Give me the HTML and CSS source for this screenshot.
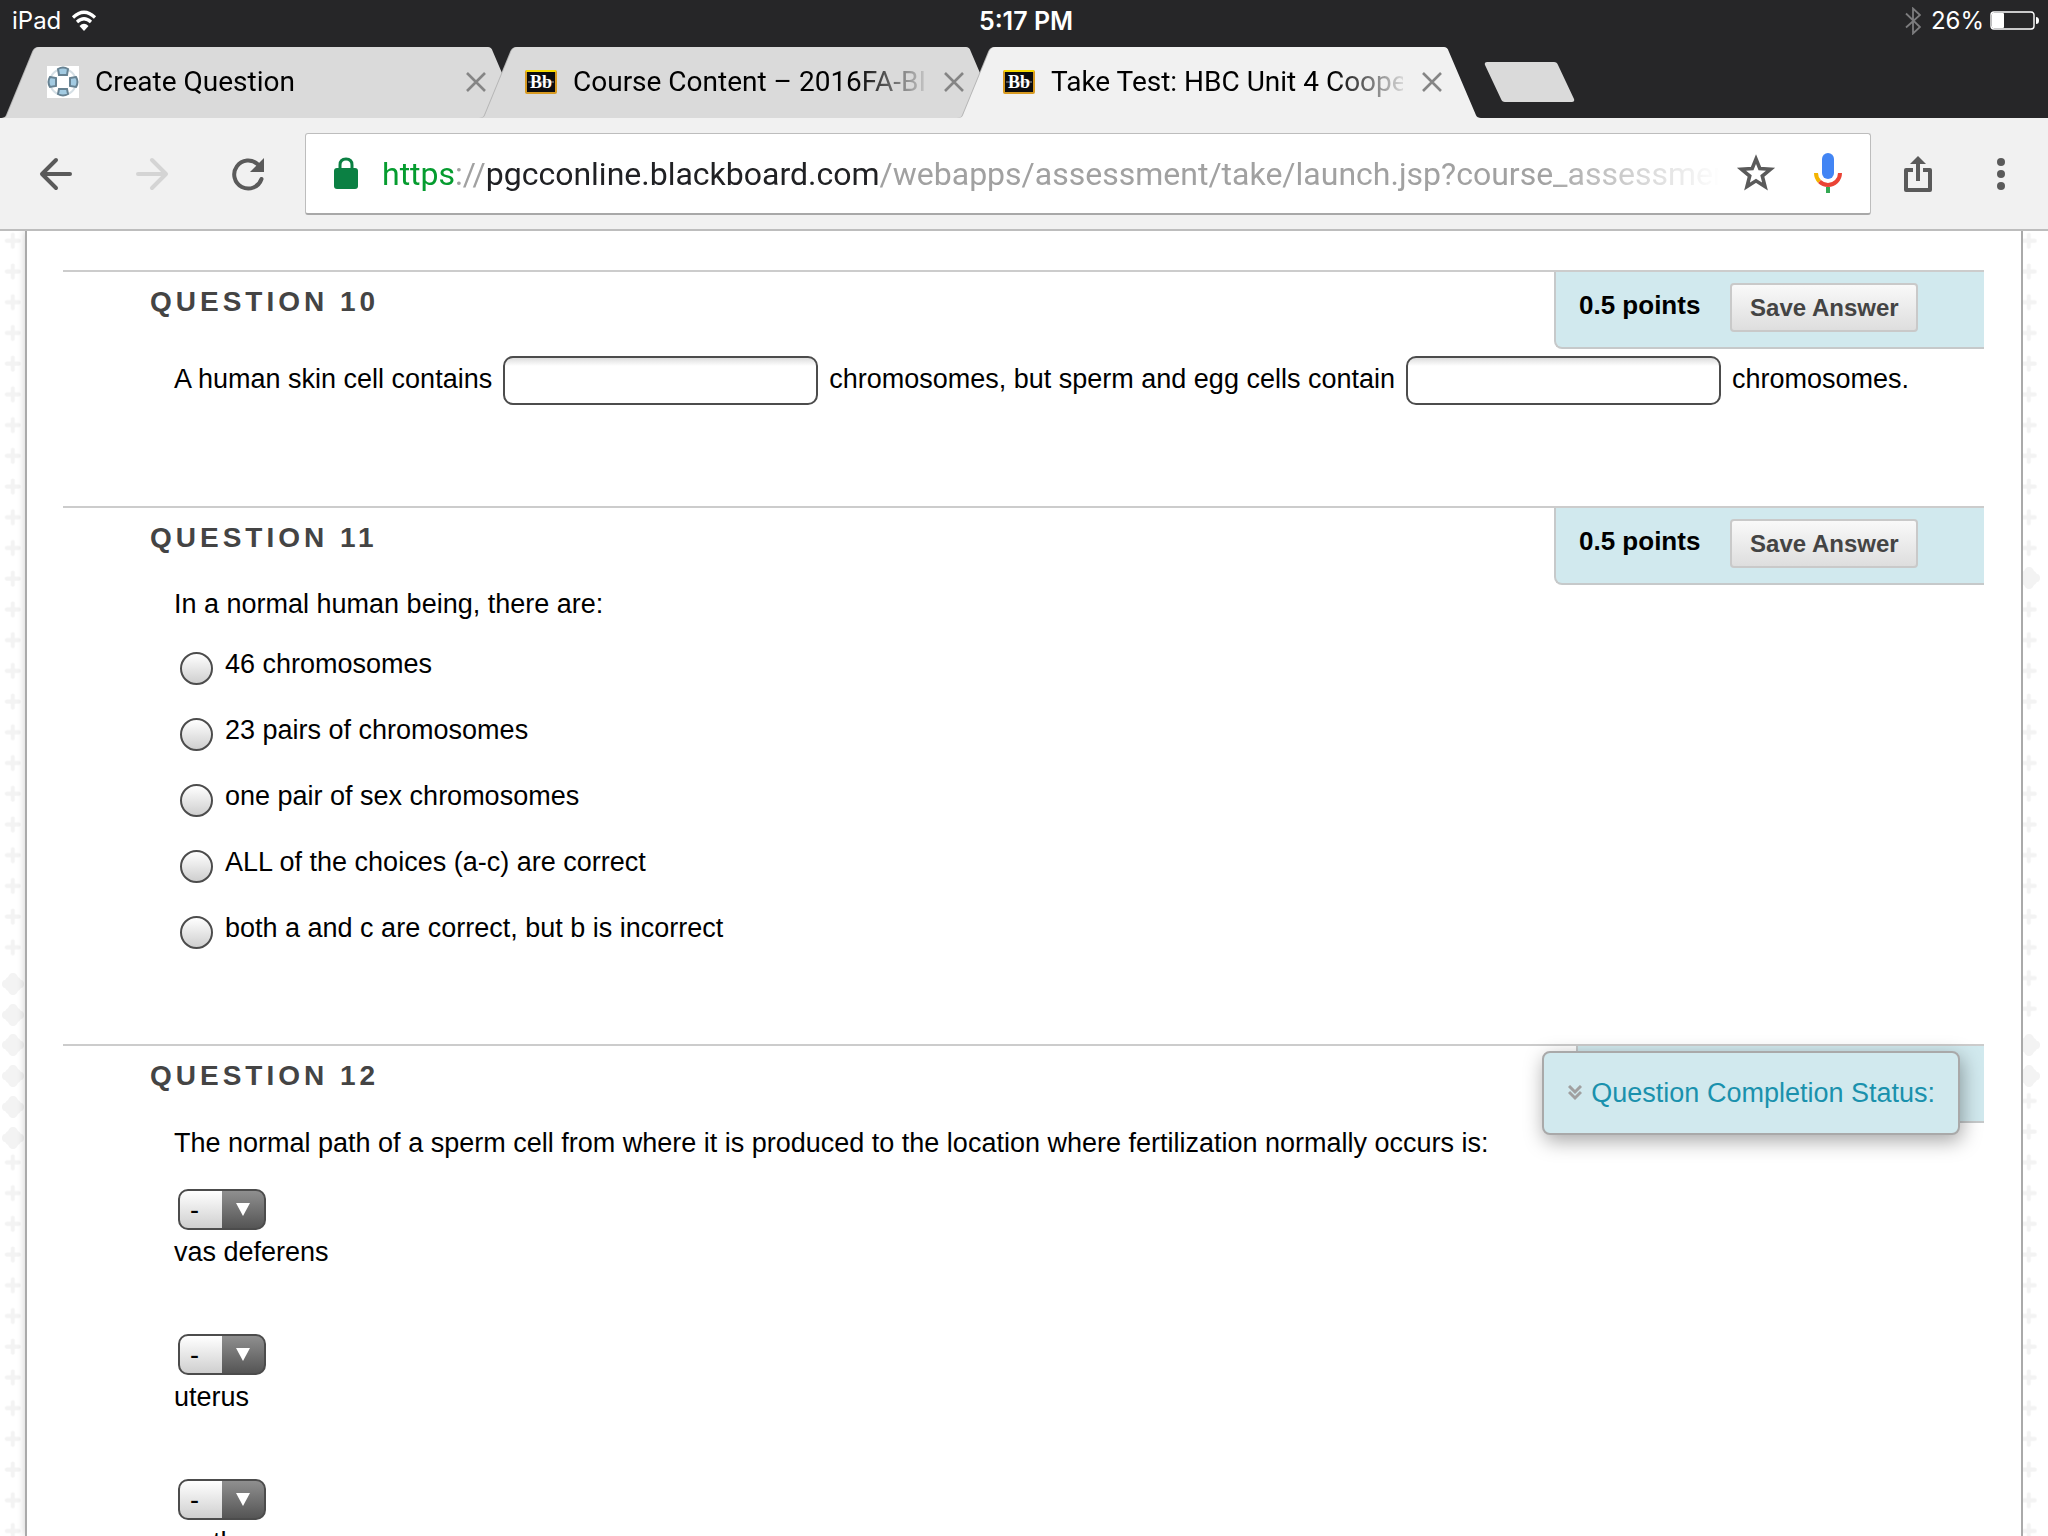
FILE: index.html
```html
<!DOCTYPE html>
<html lang="en">
<head>
<meta charset="utf-8">
<title>Take Test: HBC Unit 4</title>
<link rel="stylesheet" href="styles.css">
</head>
<body>
<svg class="defs" aria-hidden="true">
  <defs>
    <symbol id="tab-shape" viewBox="0 0 520 71" preserveAspectRatio="none">
      <path d="M0 71Q4 71 5 68L31 4Q33 0 37 0H480Q484 0 485 4L512 68Q513 71 517 71Z"/>
    </symbol>
    <symbol id="bb" viewBox="0 0 32 24">
      <rect x="1" y="1" width="30" height="22" rx="1" fill="#0c0c0e" stroke="#d79a22" stroke-width="2"/>
      <path d="M1 1H31" stroke="#f5d800" stroke-width="2"/>
      <path d="M3 12H29" stroke="#55555a" stroke-width="2"/>
      <text x="16" y="18" text-anchor="middle" font-family="Liberation Serif, serif" font-size="18" font-weight="700" fill="#fff">Bb</text>
    </symbol>
    <symbol id="close" viewBox="0 0 22 22">
      <path d="M2 2L20 20M20 2L2 20" stroke="#858585" stroke-width="2.6" fill="none"/>
    </symbol>
    <path id="diamond" d="M0-11C3-11 4-9 5-7C7-6 7-5 8-4C10-4 11-2 11 0C11 2 10 4 8 4C7 5 7 6 5 7C4 9 3 11 0 11C-3 11-4 9-5 7C-7 6-7 5-8 4C-10 4-11 2-11 0C-11-2-10-4-8-4C-7-5-7-6-5-7C-4-9-3-11 0-11Z" fill="#f3f3f3"/>
    <pattern id="plus" x="-2.2" y="-5.7" width="30.72" height="30.72" patternUnits="userSpaceOnUse">
      <path d="M15 9.500V21.500M9 15.500H21" stroke="#f3f3f3" stroke-width="4" stroke-linecap="round"/>
    </pattern>
  </defs>
</svg>

<header class="browser">
  <div class="status-bar">
    <div class="status-left">
      <span>iPad</span>
      <svg width="26" height="24" viewBox="0 0 26 24" aria-hidden="true">
        <path d="M2 8.500Q13-2 24 8.500M6 13Q13 6.500 20 13" fill="none" stroke="#fff" stroke-width="3.200"/>
        <path d="M8.500 17Q13 12.500 17.500 17L13 22Z" fill="#fff"/>
      </svg>
    </div>
    <time class="clock">5:17 PM</time>
    <div class="status-right">
      <svg width="16" height="28" viewBox="0 0 16 28" aria-hidden="true">
        <path d="M1 6.500L15 20L8 26.500V1.500L15 8L1 20.500" fill="none" stroke="#7c7c7e" stroke-width="1.800"/>
      </svg>
      <span>26%</span>
      <svg class="battery" width="50" height="19" viewBox="0 0 50 19" aria-hidden="true">
        <rect x="1" y="1" width="43" height="17" rx="3" fill="none" stroke="#fff" stroke-width="1.400"/>
        <rect x="2" y="2" width="12" height="15" rx="1" fill="#fff"/>
        <path d="M46 6Q49 6 49 9.500T46 13Z" fill="#fff"/>
      </svg>
    </div>
  </div>

  <nav class="tabs" aria-label="Tabs">
    <div class="tab">
      <svg class="tab-back"><use href="#tab-shape"/></svg>
      <svg class="favicon" width="32" height="32" viewBox="0 0 32 32" aria-hidden="true">
        <path d="M0 0H32V32H0Z" fill="#fff"/>
        <circle cx="16" cy="16" r="13" fill="none" stroke="#d5dfe5" stroke-width="2"/>
        <g fill="#a3cbe2" stroke="#678292" stroke-width="2">
          <path d="M11 3Q16 0 21 3L20 9H12Z"/>
          <path d="M12 23H20L21 28Q16 31 11 28Z"/>
          <path d="M3 11L9 12V20L3 21Q0 16 3 11Z"/>
          <path d="M29 11L23 12V20L29 21Q32 16 29 11Z"/>
        </g>
      </svg>
      <a class="tab-title" href="#create">Create Question</a>
      <button class="tab-close" aria-label="Close tab"><svg width="22" height="22"><use href="#close"/></svg></button>
    </div>
    <div class="tab">
      <svg class="tab-back"><use href="#tab-shape"/></svg>
      <svg class="favicon" width="32" height="24" aria-hidden="true"><use href="#bb"/></svg>
      <a class="tab-title" href="#content">Course Content – 2016FA-BIO</a>
      <button class="tab-close" aria-label="Close tab"><svg width="22" height="22"><use href="#close"/></svg></button>
    </div>
    <div class="tab active">
      <svg class="tab-back"><use href="#tab-shape"/></svg>
      <svg class="favicon" width="32" height="24" aria-hidden="true"><use href="#bb"/></svg>
      <a class="tab-title" href="#test">Take Test: HBC Unit 4 Cooper</a>
      <button class="tab-close" aria-label="Close tab"><svg width="22" height="22"><use href="#close"/></svg></button>
    </div>
    <button class="new-tab" aria-label="New tab">
      <svg width="91" height="40" viewBox="0 0 91 40"><path d="M3 0H70Q73 0 74 3L90 37Q91 40 88 40H21Q18 40 17 37L1 3Q0 0 3 0Z" fill="#dadada"/></svg>
    </button>
  </nav>

  <div class="toolbar">
    <button class="tool" aria-label="Back">
      <svg width="34" height="34" viewBox="0 0 34 34"><path d="M31 17H4M17 3L3 17L17 31" fill="none" stroke="#5a5a5a" stroke-width="4" stroke-linecap="round" stroke-linejoin="round"/></svg>
    </button>
    <button class="tool" aria-label="Forward" disabled>
      <svg width="34" height="34" viewBox="0 0 34 34"><path d="M3 17H30M17 3L31 17L17 31" fill="none" stroke="#d4d4d4" stroke-width="4" stroke-linecap="round" stroke-linejoin="round"/></svg>
    </button>
    <button class="tool" aria-label="Reload">
      <svg width="34" height="34" viewBox="0 0 34 34"><path d="M30.500 22A14 14 0 1 1 27 7.500" fill="none" stroke="#5a5a5a" stroke-width="4" stroke-linecap="round"/><path d="M33 1V15H19Z" fill="#5a5a5a"/></svg>
    </button>
    <div class="omnibox">
      <svg width="24" height="32" viewBox="0 0 24 32" aria-hidden="true"><path d="M6 13V8Q6 2 12 2T18 8V13" fill="none" stroke="#0b8043" stroke-width="3"/><rect y="11" width="24" height="21" rx="3" fill="#0b8043"/></svg>
      <div class="url" role="textbox" aria-label="Address"><span class="scheme">https</span>://<span class="host">pgcconline.blackboard.com</span>/webapps/assessment/take/launch.jsp?course_assessment_id</div>
      <button class="box-tool" aria-label="Bookmark">
        <svg width="40" height="38" viewBox="0 0 40 38"><path d="M20 5L23.800 14.500L34.500 15.300L26.300 22L29 32.500L20 26.800L11 32.500L13.700 22L5.500 15.300L16.200 14.500Z" fill="none" stroke="#5a5a5a" stroke-width="3.600"/></svg>
      </button>
      <button class="box-tool" aria-label="Voice search">
        <svg width="30" height="40" viewBox="0 0 30 40"><rect x="9" width="12" height="26" rx="6" fill="#4285f4"/><path d="M3 20Q3 25 6.500 28.500" fill="none" stroke="#f4b400" stroke-width="4"/><path d="M6.500 28.500Q10 32 15 32Q20 32 23.500 28.500T27 20" fill="none" stroke="#ea4335" stroke-width="4"/><path d="M15 34V40" stroke="#34a853" stroke-width="4"/></svg>
      </button>
    </div>
    <button class="tool share" aria-label="Share">
      <svg width="28" height="36" viewBox="0 0 28 36"><path d="M9 14H2V34H26V14H19M14 25V5" fill="none" stroke="#5a5a5a" stroke-width="4" stroke-linejoin="round"/><path d="M14 0L22 8H6Z" fill="#5a5a5a"/></svg>
    </button>
    <button class="tool menu" aria-label="Menu">
      <svg width="8" height="32" viewBox="0 0 8 32"><g fill="#5a5a5a"><circle cx="4" cy="4" r="4"/><circle cx="4" cy="16" r="4"/><circle cx="4" cy="28" r="4"/></g></svg>
    </button>
  </div>
</header>

<div class="viewport">
  <svg class="margin" aria-hidden="true">
    <rect width="100%" height="100%" fill="url(#plus)"/>
    <g><path d="M0 738H25V922H0Z" fill="#fff"/><use href="#diamond" x="13" y="753"/><use href="#diamond" x="13" y="784"/><use href="#diamond" x="13" y="814"/><use href="#diamond" x="13" y="845"/><use href="#diamond" x="13" y="876"/><use href="#diamond" x="13" y="907"/></g>
  </svg>
  <main class="page">
    <article class="question">
      <header class="question-head">
        <h2>Question 10</h2>
        <div class="score"><strong>0.5 points</strong><button class="save">Save Answer</button></div>
      </header>
      <div class="question-body blanks">
        <label for="blank-a">A human skin cell contains</label>
        <input id="blank-a" type="text">
        <label for="blank-b">chromosomes, but sperm and egg cells contain</label>
        <input id="blank-b" type="text">
        <span>chromosomes.</span>
      </div>
    </article>

    <article class="question">
      <header class="question-head">
        <h2>Question 11</h2>
        <div class="score"><strong>0.5 points</strong><button class="save">Save Answer</button></div>
      </header>
      <div class="question-body choices">
        <p>In a normal human being, there are:</p>
        <label><input type="radio" name="q11"><span>46 chromosomes</span></label>
        <label><input type="radio" name="q11"><span>23 pairs of chromosomes</span></label>
        <label><input type="radio" name="q11"><span>one pair of sex chromosomes</span></label>
        <label><input type="radio" name="q11"><span>ALL of the choices (a-c) are correct</span></label>
        <label><input type="radio" name="q11"><span>both a and c are correct, but b is incorrect</span></label>
      </div>
    </article>

    <article class="question">
      <header class="question-head">
        <h2>Question 12</h2>
        <div class="score plain"></div>
      </header>
      <div class="question-body ordering">
        <p>The normal path of a sperm cell from where it is produced to the location where fertilization normally occurs is:</p>
        <div class="order-item"><div class="picker"><select id="step-a"><option>-</option></select></div><label for="step-a">vas deferens</label></div>
        <div class="order-item"><div class="picker"><select id="step-b"><option>-</option></select></div><label for="step-b">uterus</label></div>
        <div class="order-item"><div class="picker"><select id="step-c"><option>-</option></select></div><label for="step-c">urethra</label></div>
      </div>
    </article>
  </main>
  <svg class="margin" aria-hidden="true">
    <g transform="translate(-7)">
      <rect width="40" height="100%" fill="url(#plus)"/>
      <path d="M0 332H33V363H0ZM0 799H33V861H0Z" fill="#fff"/><use href="#diamond" x="13" y="347"/><use href="#diamond" x="13" y="814"/><use href="#diamond" x="13" y="845"/>
    </g>
  </svg>
  <a class="completion" href="#status">
    <svg width="14" height="16" viewBox="0 0 14 16" aria-hidden="true"><path d="M1 1L7 7L13 1M1 7L7 13L13 7" fill="none" stroke="#a0a0a0" stroke-width="3"/></svg>
    Question Completion Status:
  </a>
</div>
</body>
</html>
```
FILE: styles.css
```css
* { box-sizing: border-box; }

body {
  margin: 0;
  height: 100vh;
  display: flex;
  flex-direction: column;
  overflow: hidden;
  background: #fff;
  color: #000;
  font: 27px/32px "Liberation Sans", Arial, sans-serif;
}

button { border: 0; padding: 0; background: none; font: inherit; }
svg { display: block; flex: none; }
h2, p { margin: 0; }
.defs { position: absolute; width: 0; height: 0; }

/* Browser chrome */
.browser { flex: none; background: #262628; font-family: Roboto, sans-serif; }

.status-bar {
  display: grid;
  grid-template-columns: 1fr auto 1fr;
  align-items: center;
  height: 47px;
  padding: 0 8px 6px 12px;
  color: #fff;
  font: 24px/28px Inter, sans-serif;
}
.status-left, .status-right { display: flex; align-items: center; gap: 10px; }
.status-right { justify-content: flex-end; }
.clock { font-size: 25px; font-weight: 600; }
.battery { margin-left: -4px; }

.tabs { display: flex; height: 71px; padding-left: 2px; font-size: 28px; }
.tab {
  position: relative;
  flex: 0 1 526px;
  min-width: 0;
  display: flex;
  align-items: center;
  padding: 0 41px 2px 45px;
}
.tab + .tab { margin-left: -48px; }
.tab-back {
  position: absolute;
  inset: 0;
  width: 100%;
  height: 100%;
  fill: #dadada;
  filter: drop-shadow(-1px 0 0 #b4b4b4);
}
.tab.active .tab-back { fill: #f1f1f1; }
.tab > :not(.tab-back) { position: relative; }
.tab-title {
  flex: 1;
  min-width: 0;
  margin: 0 18px 0 16px;
  overflow: hidden;
  white-space: nowrap;
  color: #000;
  text-decoration: none;
  mask-image: linear-gradient(to right, #000 calc(100% - 70px), rgba(0, 0, 0, .1));
}
.new-tab { align-self: flex-start; margin-top: 15px; }

.toolbar {
  display: flex;
  align-items: center;
  height: 113px;
  padding: 0 11px 0 8px;
  background: #f1f1f1;
  border-bottom: 2px solid #bdbdbd;
}
.tool { flex: none; width: 96px; height: 96px; display: grid; place-items: center; }
.tool.share { width: 94px; }
.tool.menu { width: 72px; }
.omnibox {
  flex: 1;
  min-width: 0;
  display: flex;
  align-items: center;
  height: 82px;
  margin-left: 9px;
  padding: 0 6px 0 28px;
  background: #fff;
  border: 1px solid #bdbdbd;
  border-bottom: 2px solid #a8a8a8;
  border-radius: 3px;
}
.url {
  flex: 1;
  min-width: 0;
  margin-left: 24px;
  padding-top: 2px;
  overflow: hidden;
  white-space: nowrap;
  color: #a1a1a1;
  font-size: 32px;
  line-height: 44px;
  mask-image: linear-gradient(to right, #000 calc(100% - 180px), transparent);
}
.scheme { color: #059c2f; }
.host { color: #202124; }
.box-tool { flex: none; width: 72px; height: 72px; display: grid; place-items: center; }

/* Test page */
.viewport {
  position: relative;
  flex: 1;
  min-height: 0;
  display: flex;
  overflow: hidden;
}
.margin { width: 25px; height: 100%; background: #fff; }
.page {
  flex: 1;
  min-width: 0;
  padding: 39px 37px 0 36px;
  background: #fff;
  border: solid #aaa;
  border-width: 0 2px;
  box-shadow: 0 0 8px rgba(0, 0, 0, .2);
}
.question { border-top: 2px solid #ccc; }
.question-head { display: flex; justify-content: space-between; height: 77px; }
h2 {
  padding: 14px 0 0 87px;
  color: #444;
  font-size: 28px;
  line-height: 32px;
  letter-spacing: 4px;
  text-transform: uppercase;
}
.score {
  display: flex;
  align-items: flex-start;
  gap: 29px;
  width: 430px;
  padding: 11px 23px;
  background: #d1e9ee;
  border: solid #c6c9ca;
  border-width: 0 0 2px 2px;
  border-radius: 0 0 0 8px;
  font-size: 26px;
}
.score.plain { width: 408px; }
.score strong { padding-right: 1px; line-height: 44px; }
.save {
  width: 188px;
  height: 49px;
  color: #444;
  background: linear-gradient(#f9f9f9, #dedede);
  border: 2px solid #c9c9c9;
  border-radius: 4px;
  font-size: 24px;
  font-weight: 700;
}
.question-body { padding-left: 111px; }

.blanks { display: flex; align-items: center; gap: 11px; padding-top: 7px; padding-bottom: 101px; white-space: nowrap; }
.blanks label, .blanks span { padding-bottom: 3px; }
.blanks input {
  width: 315px;
  height: 49px;
  padding: 0 8px;
  border: 2px solid #4c4c4c;
  border-radius: 10px;
  background: linear-gradient(#ddd, #fff 8px);
  font: inherit;
}

.choices { padding-top: 3px; padding-bottom: 82px; }
.choices p { margin-bottom: 12px; }
.choices label { display: flex; align-items: center; gap: 12px; height: 66px; }
.choices span { padding-bottom: 3px; }
.choices input {
  appearance: none;
  width: 33px;
  height: 33px;
  margin: 7px 0 0 6px;
  border: 2px solid #4c4c4c;
  border-radius: 50%;
  background: linear-gradient(#fff, #cfcfcf);
}

.ordering { padding-top: 4px; }
.ordering p { margin-bottom: 30px; }
.order-item { display: flex; flex-direction: column; gap: 6px; margin-bottom: 66px; }
.picker { position: relative; align-self: flex-start; margin-left: 4px; }
.picker select {
  appearance: none;
  display: block;
  width: 88px;
  height: 41px;
  padding: 0 0 0 10px;
  border: 2px solid #4c4c4c;
  border-radius: 10px;
  background:
    linear-gradient(#8f8f8f, #555) right / 42px 100% no-repeat,
    linear-gradient(#fff, #cfcfcf);
  color: #000;
  font: inherit;
}
.picker::after {
  content: "";
  position: absolute;
  top: 14px;
  right: 16px;
  border: solid transparent;
  border-width: 13px 7px 0;
  border-top-color: #fff;
  pointer-events: none;
}

.completion {
  position: absolute;
  top: 820px;
  right: 88px;
  display: flex;
  align-items: center;
  gap: 9px;
  height: 84px;
  padding: 0 23px 0 24px;
  color: #1a91ad;
  background: #d1e9ee;
  border: 2px solid #a9a9a9;
  border-radius: 8px;
  box-shadow: 2px 6px 20px rgba(0, 0, 0, .35);
  text-decoration: none;
  white-space: nowrap;
}
```
